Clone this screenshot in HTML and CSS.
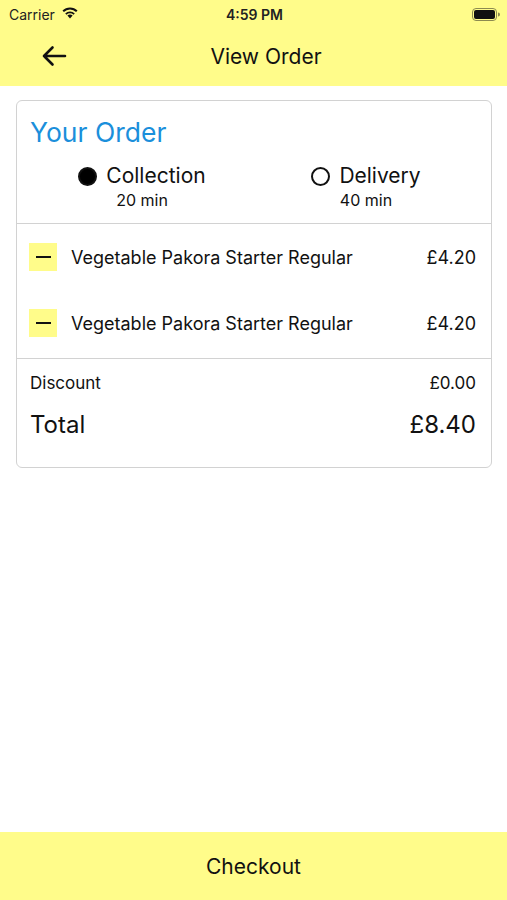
FILE: index.html
```html
<!DOCTYPE html>
<html lang="en">
<head>
  <meta charset="UTF-8" />
  <meta name="viewport" content="width=device-width, initial-scale=1.0"/>
  <title>View Order</title>
  <link rel="stylesheet" href="styles.css">
</head>
<body>

  <header class="top">
    <div class="status-bar">
      <div class="carrier">
        Carrier
        <svg class="wifi" width="18" height="13" viewBox="0 0 18 13">
          <path d="M9 12.5 L6.4 9.6 A3.8 3.8 0 0 1 11.6 9.6 Z" fill="#111"/>
          <path d="M4.2 7.4 A6.9 6.9 0 0 1 13.8 7.4 L12.5 8.8 A5 5 0 0 0 5.5 8.8 Z" fill="#111"/>
          <path d="M1.5 4.6 A10.6 10.6 0 0 1 16.5 4.6 L15.1 6.1 A8.6 8.6 0 0 0 2.9 6.1 Z" fill="#111"/>
        </svg>
      </div>
      <div class="time">4:59 PM</div>
      <div class="battery">
        <svg width="28" height="13" viewBox="0 0 28 13">
          <rect x="0.5" y="0.5" width="24" height="12" rx="3.5" fill="none" stroke="#8c8a50"/>
          <rect x="2" y="2" width="21" height="9" rx="2" fill="#111"/>
          <path d="M26 4.5 v4 a2 2 0 0 0 0 -4 z" fill="#8c8a50"/>
        </svg>
      </div>
    </div>
    <nav class="nav">
      <div class="nav-btn">
        <svg width="26" height="22" viewBox="0 0 26 22">
          <path d="M24 11 H3 M11.5 2.5 L3 11 L11.5 19.5" fill="none" stroke="#111" stroke-width="2.6" stroke-linecap="round" stroke-linejoin="round"/>
        </svg>
      </div>
      <div class="nav-title">View Order</div>
    </nav>
  </header>

  <div class="main">
    <div class="order-card">
      <div class="card-head">
        <h2>Your Order</h2>
        <div class="options">
          <div class="option">
            <div class="option-label"><span class="radio checked"></span>Collection</div>
            <div class="option-time">20 min</div>
          </div>
          <div class="option">
            <div class="option-label"><span class="radio"></span>Delivery</div>
            <div class="option-time">40 min</div>
          </div>
        </div>
      </div>

      <div class="items">
        <div class="item">
          <button class="minus-btn"><span></span></button>
          <div class="item-name">Vegetable Pakora Starter Regular</div>
          <div class="item-price">£4.20</div>
        </div>
        <div class="item">
          <button class="minus-btn"><span></span></button>
          <div class="item-name">Vegetable Pakora Starter Regular</div>
          <div class="item-price">£4.20</div>
        </div>
      </div>

      <div class="totals">
        <div class="discount-row">
          <span>Discount</span>
          <span>£0.00</span>
        </div>
        <div class="total-row">
          <span>Total</span>
          <span>£8.40</span>
        </div>
      </div>
    </div>
  </div>

  <div class="checkout">Checkout</div>

</body>
</html>
```

FILE: styles.css
```css
* {
  margin: 0;
  padding: 0;
  box-sizing: border-box;
  font-family: Inter, 'Liberation Sans', Arial, sans-serif;
}

body {
  height: 900px;
  background-color: #fff;
  color: #111;
  display: flex;
  flex-direction: column;
}

.top {
  background-color: #fffc8a;
  height: 86px;
}

.status-bar {
  display: flex;
  align-items: center;
  justify-content: space-between;
  height: 28px;
  padding: 0 7px 0 9px;
  font-size: 14px;
}

.carrier {
  flex: 1;
  display: flex;
  align-items: center;
  gap: 6px;
  color: #222;
}

.wifi {
  margin-top: -3px;
}

.time {
  font-weight: 600;
  color: #222;
}

.battery {
  flex: 1;
  display: flex;
  justify-content: flex-end;
}

.nav {
  display: flex;
  align-items: center;
  height: 56px;
  padding: 0 0 0 41px;
}

.nav-btn {
  width: 26px;
  height: 22px;
  display: flex;
}

.nav-title {
  flex: 1;
  text-align: center;
  font-size: 21px;
  padding-right: 42px;
  color: #111;
}

.main {
  flex: 1;
  padding: 14px 15px 0 16px;
}

.order-card {
  border: 1.5px solid #d2d2d2;
  border-radius: 6px;
  padding-bottom: 27px;
}

.card-head {
  padding: 15px 0 12px 13px;
  border-bottom: 1.5px solid #d2d2d2;
}

.card-head h2 {
  font-size: 26.5px;
  font-weight: 400;
  color: #1b8fdb;
  line-height: 32px;
}

.options {
  display: flex;
  padding-top: 15px;
}

.option {
  width: 224px;
  display: flex;
  flex-direction: column;
  align-items: center;
}

.option-label {
  display: flex;
  align-items: center;
  gap: 9px;
  font-size: 21px;
  line-height: 26px;
}

.radio {
  width: 19px;
  height: 19px;
  border-radius: 50%;
  border: 2px solid #111;
}

.radio.checked {
  background-color: #000;
}

.option-time {
  font-size: 16px;
  line-height: 22px;
}

.items {
  display: flex;
  flex-direction: column;
  gap: 38px;
  padding: 19px 15px 21px 12px;
  border-bottom: 1.5px solid #d2d2d2;
}

.item {
  display: flex;
  align-items: center;
  height: 28px;
}

.minus-btn {
  width: 28px;
  height: 28px;
  border: none;
  background-color: #fffc8a;
  display: flex;
  align-items: center;
  justify-content: center;
  margin-right: 14px;
}

.minus-btn span {
  width: 15px;
  height: 2.5px;
  background-color: #111;
}

.item-name {
  flex: 1;
  font-size: 18px;
}

.item-price {
  font-size: 18px;
}

.totals {
  padding: 13px 15px 0 13px;
}

.discount-row,
.total-row {
  display: flex;
  justify-content: space-between;
  align-items: center;
}

.discount-row {
  font-size: 17px;
  line-height: 22px;
}

.total-row {
  font-size: 24px;
  line-height: 30px;
  margin-top: 16px;
}

.checkout {
  height: 68px;
  background-color: #fffc8a;
  display: flex;
  align-items: center;
  justify-content: center;
  font-size: 21px;
  color: #111;
}
```
